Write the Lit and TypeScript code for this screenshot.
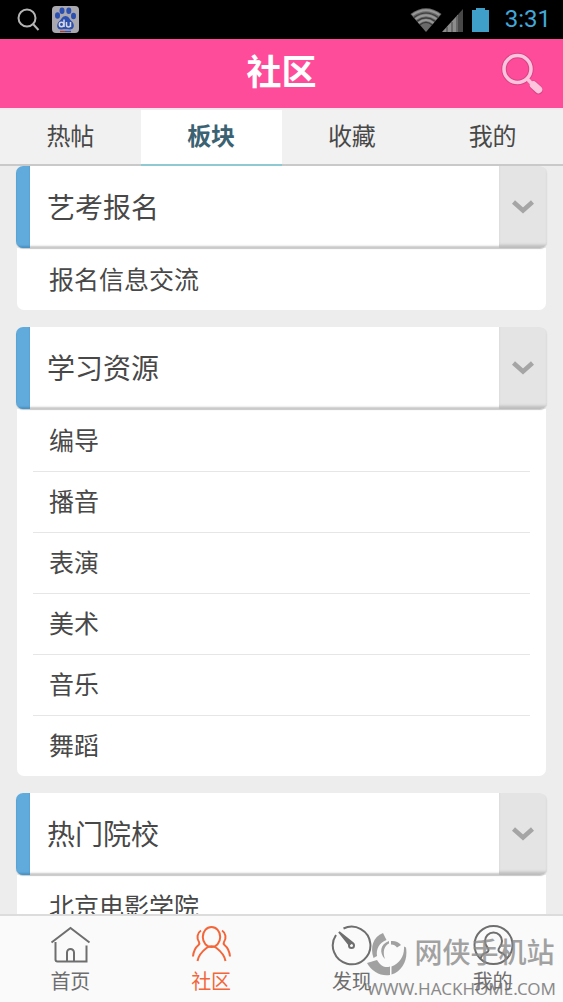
import { LitElement, html, css, svg } from "lit";
import { customElement, property, state } from "lit/decorators.js";
import { classMap } from "lit/directives/class-map.js";

interface Board {
  name: string;
  items: string[];
}

const BOARDS: Board[] = [
  { name: "艺考报名", items: ["报名信息交流"] },
  { name: "学习资源", items: ["编导", "播音", "表演", "美术", "音乐", "舞蹈"] },
  { name: "热门院校", items: ["北京电影学院"] },
];

const TABS = ["热帖", "板块", "收藏", "我的"];

const NAV = [
  {
    label: "首页",
    icon: svg`<path d="M2.500 18.500 21.500 4 40.500 18.500"/><path d="M6.500 18v17.500a2 2 0 0 0 2 2H37.500V21.500"/><path d="M18 37V28.500a3.500 3.500 0 0 1 7 0V37"/>`,
  },
  {
    label: "社区",
    icon: svg`<ellipse cx="21.500" cy="13" rx="8.700" ry="10"/><path d="M7.500 37c1-6 4.500-9.500 9-13 3-2 7-2 10 0 4.500 3.500 8 7 9 13"/><path d="M11 6.500c-4 2.500-4.500 8-2 11.500 1 1.500.5 2-.5 3-3 2.500-5 5.500-5.500 11.500"/><path d="M32 6.500c4 2.500 4.500 8 2 11.500-1 1.500-.5 2 .5 3 3 2.500 5 5.500 5.500 11.500"/>`,
  },
  {
    label: "发现",
    icon: svg`<path d="M12.500 4.500A18.800 18.800 0 1 1 5 11"/><circle cx="20.500" cy="21.500" r="2.500"/><path d="M8 8 21 18.500 18 20.500Z" fill="currentColor"/>`,
  },
  {
    label: "我的",
    icon: svg`<circle cx="21.500" cy="21" r="19"/><path d="M8.500 34.500c1-3.500 3-5 6-6 2.500-1 2.500-3 1-5-1.500-1.500-2.500-3.500-2.500-6.500a8.500 8.500 0 0 1 17 0c0 3-1 5-2.500 6.500-1.500 2-1.500 4 1 5 3 1 5 2.500 6 6"/>`,
  },
];

@customElement("board-card")
class BoardCard extends LitElement {
  @property({ attribute: false }) board!: Board;
  @state() private open = true;

  static styles = css`
    :host {
      display: block;
    }
    .head {
      position: relative;
      display: flex;
      align-items: stretch;
      width: 100%;
      height: 82px;
      padding: 0;
      border: 0;
      border-radius: 7px;
      overflow: hidden;
      background: #fff;
      color: #484848;
      font: 28px/40px "Noto Sans CJK SC", sans-serif;
      text-align: left;
      box-shadow: inset 0 -2px 2px #c8c8c8, 0 1px 1px #c8c8c8;
    }
    .bar {
      width: 14px;
      background: #61abdc;
      box-shadow: inset 0 -2px 2px #4a92c2;
    }
    .name {
      flex: 1;
      align-self: center;
      padding: 0 0 2px 17px;
    }
    .toggle {
      display: flex;
      align-items: center;
      justify-content: center;
      width: 48px;
      background: #e4e4e4;
      box-shadow: inset 0 -4px 3px -1px #bcbcbc;
    }
    .toggle svg {
      width: 24px;
      height: 16px;
    }
    .list {
      margin: 0 1px;
      padding: 2px 16px 0;
      list-style: none;
      background: #fff;
      border-radius: 0 0 7px 7px;
    }
    .item + .item {
      border-top: 1px solid #e6e6e6;
    }
    .link {
      display: block;
      padding: 0 16px 4px;
      color: #484848;
      font: 25px/56px "Noto Sans CJK SC", sans-serif;
      text-decoration: none;
    }
  `;

  render() {
    return html`
      <button class="head" aria-expanded=${this.open} @click=${() => (this.open = !this.open)}>
        <span class="bar"></span>
        <span class="name">${this.board.name}</span>
        <span class="toggle">
          <svg viewBox="0 0 24 16" fill="none" stroke="#a5a5a5" stroke-width="4.500">
            <path d="M2.500 3 12 11.500 21.500 3" />
          </svg>
        </span>
      </button>
      ${this.open
        ? html`<ul class="list">
            ${this.board.items.map(
              (item) => html`<li class="item"><a class="link" href="#">${item}</a></li>`
            )}
          </ul>`
        : ""}
    `;
  }
}

@customElement("app-root")
class AppRoot extends LitElement {
  @state() private tab = 1;
  @state() private page = 1;

  static styles = css`
    :host {
      display: flex;
      flex-direction: column;
      height: 100vh;
      overflow: hidden;
      background: #ededed;
      font-family: "Noto Sans CJK SC", sans-serif;
    }
    .status {
      display: flex;
      align-items: center;
      height: 39px;
      padding: 0 12px 0 16px;
      background: #000;
      flex: none;
    }
    .status svg {
      flex: none;
    }
    .lens {
      width: 24px;
      height: 24px;
      margin-right: 12px;
    }
    .paw {
      width: 27px;
      height: 27px;
    }
    .space {
      flex: 1;
    }
    .wifi {
      width: 32px;
      height: 26px;
    }
    .signal {
      width: 22px;
      height: 26px;
      margin-right: 8px;
    }
    .battery {
      width: 17px;
      height: 26px;
      margin-right: 16px;
    }
    .time {
      color: #41a8da;
      font: 24px/39px Roboto, sans-serif;
    }
    .header {
      display: grid;
      grid-template-columns: 1fr auto 1fr;
      align-items: center;
      height: 69px;
      padding: 0 19px;
      background: #ff4c9a;
      flex: none;
    }
    .title {
      grid-column: 2;
      margin: 0;
      padding-bottom: 8px;
      color: #fff;
      font-size: 35px;
      font-weight: 700;
      line-height: 52px;
    }
    .search {
      justify-self: end;
      width: 44px;
      height: 44px;
      padding: 0;
      border: 0;
      background: none;
    }
    .tabs {
      display: grid;
      grid-template-columns: repeat(4, 1fr);
      height: 58px;
      box-sizing: border-box;
      border-top: 2px solid #f7e8ee;
      background: #f1f1f1;
      flex: none;
    }
    .tab {
      padding: 0 0 4px;
      border: 0;
      border-bottom: 2px solid #c9c9c9;
      background: none;
      color: #484848;
      font: 24px/36px "Noto Sans CJK SC", sans-serif;
    }
    .tab.active {
      border-bottom-color: #8fc9d4;
      background: #fff;
      color: #3b6272;
      font-weight: 700;
    }
    .boards {
      display: flex;
      flex-direction: column;
      gap: 17px;
      flex: 1;
      min-height: 0;
      padding: 0 16px;
      overflow: hidden;
    }
    .boards board-card {
      flex: none;
    }
    .nav {
      position: relative;
      display: grid;
      grid-template-columns: repeat(4, 1fr);
      height: 88px;
      box-sizing: border-box;
      border-top: 2px solid #dcdcdc;
      background: #fafafa;
      flex: none;
    }
    .dest {
      display: flex;
      flex-direction: column;
      align-items: center;
      padding-top: 8px;
      color: #6e6e6e;
      font-size: 20px;
      line-height: 30px;
      text-decoration: none;
    }
    .dest svg {
      width: 42px;
      height: 42px;
      fill: none;
      stroke: currentColor;
      stroke-width: 2;
    }
    .dest.active {
      color: #f2663a;
    }
    .mark {
      position: absolute;
      right: 7px;
      bottom: 2px;
      display: grid;
      grid-template-columns: auto auto;
      justify-content: end;
      align-items: center;
      column-gap: 6px;
      color: #8c8c8c;
      opacity: 0.8;
      pointer-events: none;
    }
    .swirl {
      width: 40px;
      height: 44px;
    }
    .brand {
      padding-bottom: 6px;
      font-size: 28px;
      font-weight: 500;
      line-height: 42px;
    }
    .site {
      grid-column: 1 / 3;
      justify-self: end;
      font: 17px/22px "Noto Sans", sans-serif;
      color: #707070;
    }
  `;

  render() {
    return html`
      <div class="status">
        <svg class="lens" viewBox="0 0 24 24" fill="none" stroke="#b4b4b4" stroke-width="2">
          <circle cx="11" cy="10" r="8.500" />
          <path d="M17 16 22.500 22" />
        </svg>
        <svg class="paw" viewBox="0 0 27 27">
          <rect width="27" height="27" rx="4" fill="#aaa9b0" />
          <g fill="#2c50b0">
            <ellipse cx="5.500" cy="9.500" rx="2.500" ry="3.200" />
            <ellipse cx="10" cy="4.800" rx="2.500" ry="3.300" />
            <ellipse cx="16.800" cy="4.800" rx="2.500" ry="3.300" />
            <ellipse cx="21.500" cy="10" rx="2.500" ry="3.200" />
            <path d="M13.500 10c3 0 4 3 6 5 4 3.500 2.500 9-2 8.500-3-.5-5-.5-8 0-4.500.5-6-5-2-8.500 2-2 3-5 6-5Z" />
          </g>
          <path d="M8 25.500h5" stroke="#a04040" stroke-width="1.500" />
          <path d="M13 25.500h6" stroke="#3b4faa" stroke-width="1.500" />
          <g fill="none" stroke="#d8d8e0" stroke-width="1.500">
            <circle cx="9.500" cy="18.500" r="2.200" />
            <path d="M12 13.500V21M14.500 16v3a2 2 0 0 0 4 0v-3 5" />
          </g>
        </svg>
        <span class="space"></span>
        <svg class="wifi" viewBox="0 0 32 26">
          <path d="M.500 7Q16-4.500 31.500 7L16 25Z" fill="#6a6a6a" />
          <g fill="none" stroke="#3a3a3a" stroke-width="1.200">
            <path d="M4 10.500Q16 1.500 28 10.500" />
            <path d="M7 14.200Q16 7.500 25 14.200" />
            <path d="M10 17.800Q16 13 22 17.800" />
          </g>
          <g fill="none" stroke="#989898" stroke-width="2">
            <path d="M2.500 8Q16-1.500 29.500 8" />
            <path d="M5.500 12Q16 4.500 26.500 12" />
            <path d="M8.500 16Q16 10 23.500 16" />
          </g>
        </svg>
        <svg class="signal" viewBox="0 0 22 26">
          <path d="M0 25 16 7.500V25Z" fill="#8c8c8c" />
          <path d="M16 7.500 21 2V25H16Z" fill="#484848" />
          <path d="M5 20v5M10 15v10M15 9v16" stroke="#444" stroke-width="1" />
        </svg>
        <svg class="battery" viewBox="0 0 17 26">
          <path d="M0 3h4V1h9v2h4v22H0Z" fill="#3f9fc9" />
        </svg>
        <span class="time">3:31</span>
      </div>

      <header class="header">
        <h1 class="title">社区</h1>
        <button class="search" aria-label="搜索">
          <svg viewBox="0 0 44 44" width="44" height="44" fill="none">
            <g stroke="#c4417d" stroke-opacity=".7" stroke-linecap="round">
              <circle cx="17.500" cy="17" r="13.500" stroke-width="5.500" />
              <path d="M33.500 33 38.500 38" stroke-width="9" />
            </g>
            <circle cx="17.500" cy="17" r="13.500" stroke="#ffc4dd" stroke-width="3.500" />
            <path d="M27 26.500 32 32" stroke="#ffc4dd" stroke-width="3.500" />
            <path d="M33.500 33 38.500 37.500" stroke="#ffc4dd" stroke-width="7.500" stroke-linecap="round" />
          </svg>
        </button>
      </header>

      <div class="tabs" role="tablist">
        ${TABS.map(
          (label, i) => html`<button
            role="tab"
            aria-selected=${i === this.tab}
            class=${classMap({ tab: true, active: i === this.tab })}
            @click=${() => (this.tab = i)}
          >${label}</button>`
        )}
      </div>

      <main class="boards">
        ${BOARDS.map((board) => html`<board-card .board=${board}></board-card>`)}
      </main>

      <nav class="nav">
        ${NAV.map(
          (dest, i) => html`<a
            href="#"
            class=${classMap({ dest: true, active: i === this.page })}
            @click=${() => (this.page = i)}
          ><svg viewBox="0 0 42 42">${dest.icon}</svg><span>${dest.label}</span></a>`
        )}
        <div class="mark">
          <svg class="swirl" viewBox="0 0 40 44" fill="currentColor">
            <path d="M16 1 19.500 8C12 11 9 17 10 24L6.500 26C3 15 6 5 16 1Z" />
            <path d="M0 31 10 28C14 35 19 36 23 34.500V43C14 44.500 5 40 0 31Z" />
            <path d="M24.500 42.500V34.500C33 31 37.500 24 37 14.500L39 15.500C41 27 36 39 24.500 42.500Z" />
            <path d="M22 9V11.500C17 14 15.500 20 18 27C12 21 13 12 22 9Z" />
            <path d="M24 9C28 8.500 31.500 10 34 13L30 15.500C28.500 13.500 27 12.500 24 12.500Z" />
          </svg>
          <span class="brand">网侠手机站</span>
          <span class="site">WWW.HACKHOME.COM</span>
        </div>
      </nav>
    `;
  }
}
